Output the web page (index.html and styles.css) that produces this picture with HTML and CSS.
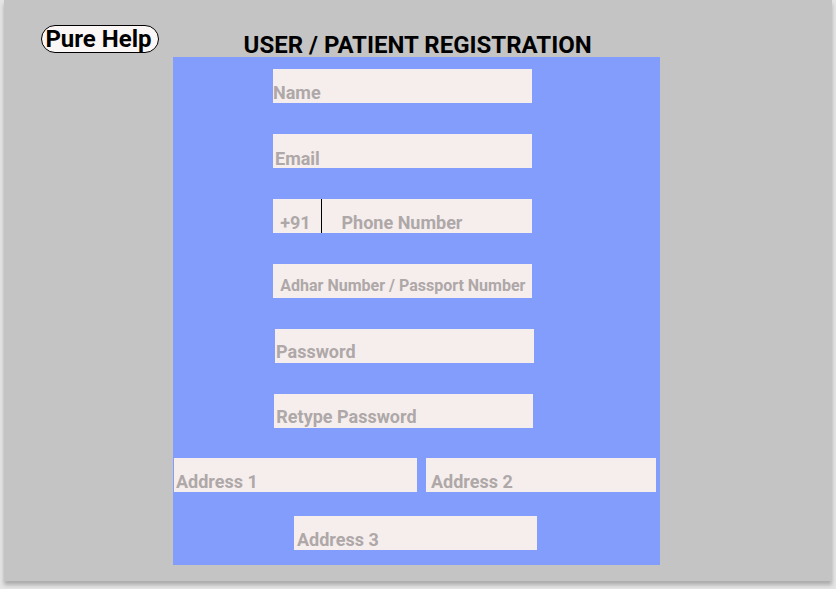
FILE: index.html
```
<!DOCTYPE html>
<html lang="en">
<head>
<meta charset="utf-8">
<title>Pure Help</title>
<link rel="stylesheet" href="styles.css">
</head>
<body>
<main class="page">
  <header class="header">
    <div class="brand">Pure Help</div>
    <h1 class="title">USER / PATIENT REGISTRATION</h1>
  </header>
  <form class="form">
    <div class="field name">Name</div>
    <div class="field email">Email</div>
    <div class="field phone"><span class="code">+91</span><span class="number">Phone Number</span></div>
    <div class="field identity">Adhar Number / Passport Number</div>
    <div class="field password">Password</div>
    <div class="field retype">Retype Password</div>
    <div class="row">
      <div class="field address1">Address 1</div>
      <div class="field address2">Address 2</div>
    </div>
    <div class="field address3">Address 3</div>
  </form>
</main>
</body>
</html>
```
FILE: styles.css
```
* { box-sizing: border-box; }

body {
  margin: 0;
  height: 589px;
  overflow: hidden;
  background: #e5e5e5;
  font-family: Roboto, "Liberation Sans", sans-serif;
  font-weight: 700;
}

.page {
  width: 828px;
  height: 581px;
  margin: 0 4px;
  background: #c4c4c4;
  box-shadow: 0 4px 4px rgba(0, 0, 0, 0.25);
}

.header {
  display: flex;
  align-items: flex-start;
  height: 57px;
  padding-left: 37px;
  color: #000;
  white-space: nowrap;
}

.brand {
  width: 118px;
  height: 28px;
  margin-top: 25px;
  padding-left: 3.4px;
  border: 1px solid #000;
  border-radius: 14px;
  background: #fcf7f7;
  font-size: 24px;
  line-height: 26px;
}

.title {
  margin: 31px 0 0 84.6px;
  font-size: 24px;
  line-height: 28px;
}

.form {
  display: flex;
  flex-direction: column;
  gap: 31px;
  width: 487px;
  height: 508px;
  margin-left: 169px;
  padding-top: 12px;
  background: #829dfc;
}

.field {
  flex: none;
  width: 259px;
  height: 34px;
  margin-left: 100px;
  padding-top: 14px;
  background: #f6eeed;
  color: #aea8a8;
  font-size: 18px;
  line-height: 20px;
  white-space: nowrap;
}

.email { padding: 15px 0 0 2px; }

.phone {
  display: flex;
  padding: 0;
}

.code {
  width: 49px;
  padding: 14px 0 0 7.2px;
  border-right: 1px solid #000;
}

.number { padding: 14px 0 0 19.5px; }

.identity {
  padding: 12px 0 0 7.3px;
  font-size: 16px;
}

.password {
  margin-left: 102px;
  padding: 13px 0 0 1px;
}

.retype {
  margin-left: 101px;
  padding: 13px 0 0 2.3px;
}

.row {
  display: flex;
  gap: 9px;
  margin: -1px 0 -7px 1px;
}

.address1 {
  width: 243px;
  margin-left: 0;
  padding-left: 2px;
}

.address2 {
  width: 230px;
  margin-left: 0;
  padding-left: 5px;
}

.address3 {
  width: 243px;
  margin-left: 121px;
  padding-left: 3px;
}
```
